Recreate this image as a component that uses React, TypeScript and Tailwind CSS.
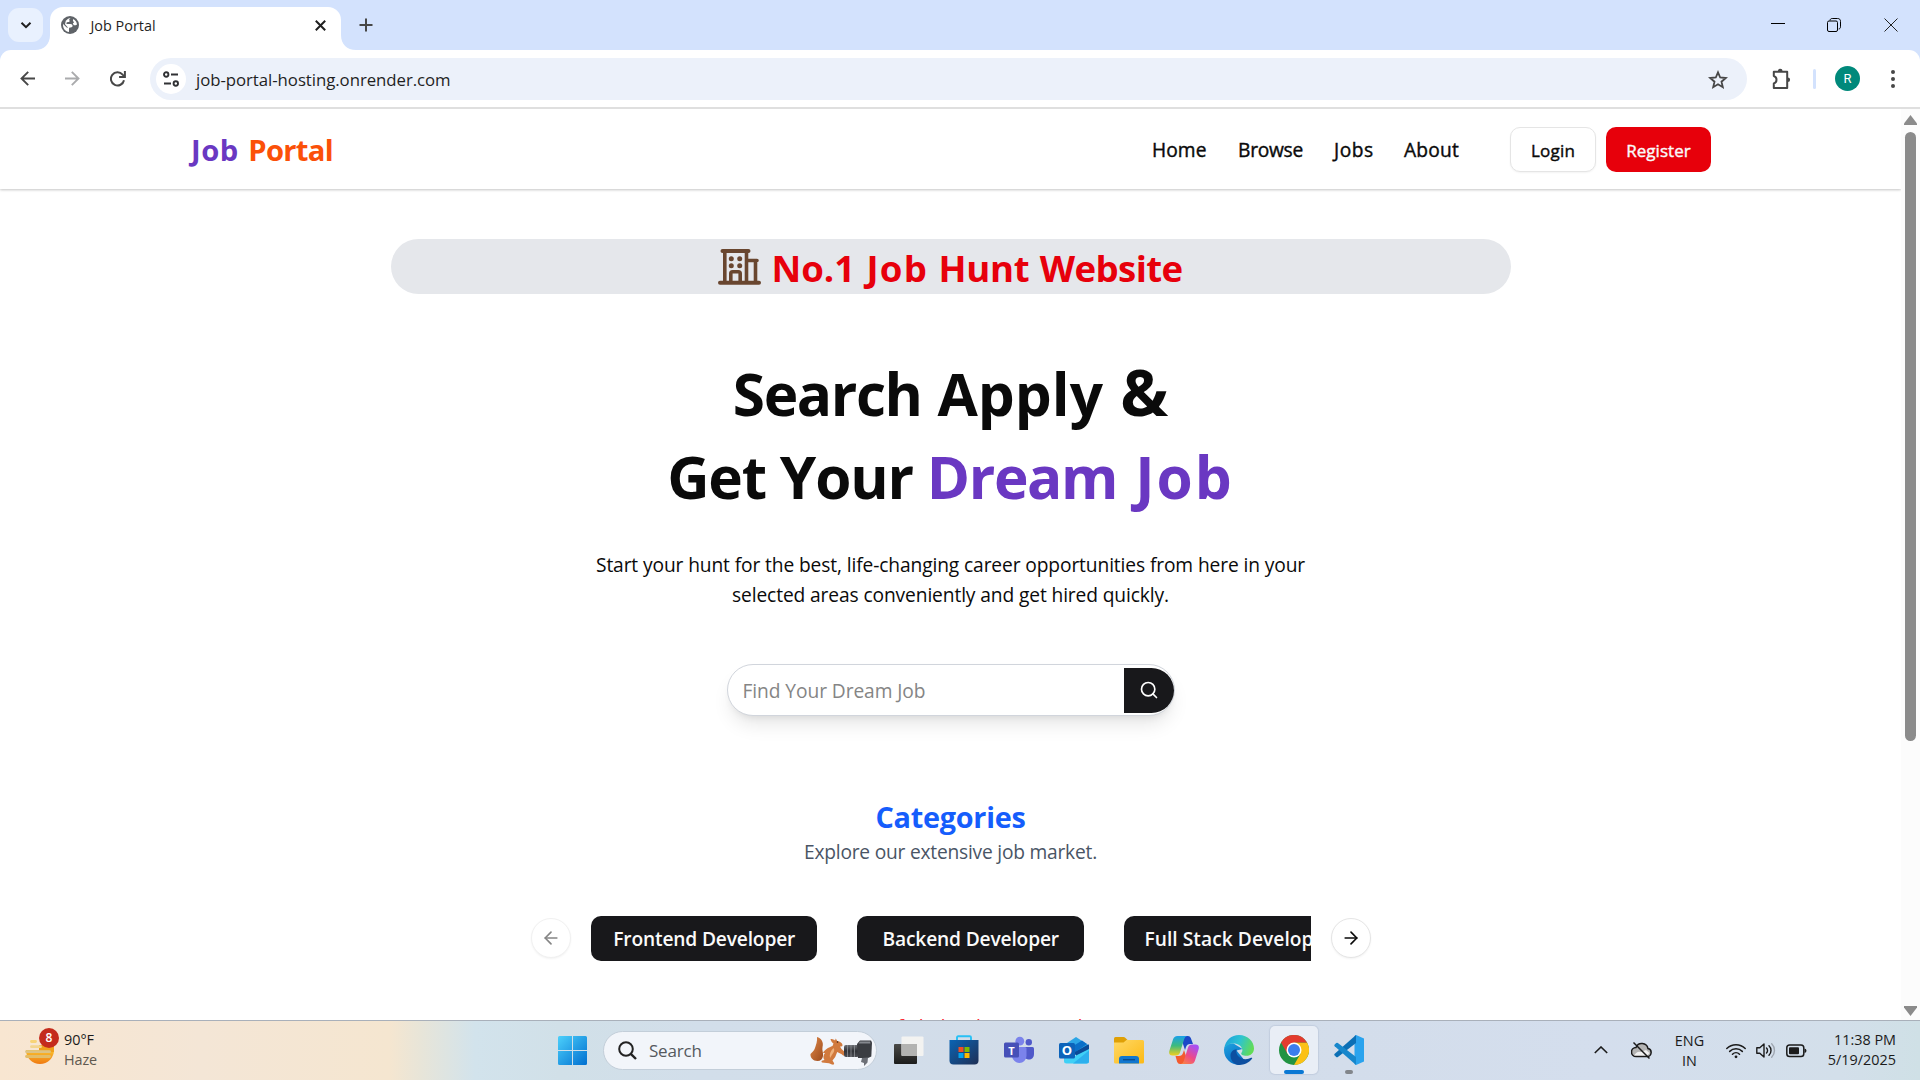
import type { ReactNode } from "react";
import { ArrowLeft, ArrowRight, Search } from "lucide-react";

/* ---------- Browser chrome ---------- */

function GlobeIcon() {
  return (
    <svg className="size-[18px]" viewBox="0 0 18 18">
      <circle cx="9" cy="9" r="9" fill="#5f6368" />
      <path d="M9.800 1.900c-1.500.5-2 1.700-1.300 2.500.4 1-.3 1.600-1.500 1.600-1.300 0-1.900.8-1.400 1.900h3.800c1.400 0 2.200.8 2.200 1.900s-.8 1.600-1.900 1.600H8.600c-.6.500-.6 1.300-.6 2.100v2.400C4.500 15.500 2 12.600 2 9c0-.4 0-.7.1-1l3.300 3.300c.4.400 1 .5 1.500.2L4 8.200l.8-3.400 2-1.800c.9-.6 2-1 3-1.100z" fill="#fff" />
      <path d="M12.200 3c2.100 1.100 3.600 3.100 3.800 5.500l-1.300.8h-1.900l-1-1.900 1.300-1.200-1.200-1.300z" fill="#fff" />
    </svg>
  );
}

function TabStrip() {
  return (
    <div className="flex h-[50px] bg-[#d3e2fd]">
      <div className="mt-2 ml-2 flex h-[34px] w-[35px] items-center justify-center rounded-[11px] bg-[#e9f1fe]">
        <svg className="size-[12px]" viewBox="0 0 12 12" fill="none" stroke="#1f1f1f" strokeWidth="2">
          <path d="M1.500 3.700 6 8.200l4.500-4.500" />
        </svg>
      </div>
      <div className="relative mt-[7px] ml-[7px] flex h-[43px] w-[291px] items-start rounded-t-[13px] bg-white">
        <svg className="absolute bottom-0 -left-[15px] size-[15px]" viewBox="0 0 15 15">
          <path d="M15 0v15H0C9 15 15 9 15 0z" fill="#fff" />
        </svg>
        <svg className="absolute -right-[15px] bottom-0 size-[15px]" viewBox="0 0 15 15">
          <path d="M0 0v15h15C6 15 0 9 0 0z" fill="#fff" />
        </svg>
        <div className="mt-[9px] ml-[11px]">
          <GlobeIcon />
        </div>
        <span className="mt-[8.500px] ml-[11.500px] text-[14.400px] leading-5 text-[#1f1f1f]">Job Portal</span>
        <svg className="mt-[12.500px] mr-[15px] ml-auto size-[11px]" viewBox="0 0 11 11" stroke="#1f1f1f" strokeWidth="2">
          <path d="m.8.800 9.400 9.400M10.200.8.8 10.200" />
        </svg>
      </div>
      <svg className="mt-[18px] ml-[17.500px] size-[14px]" viewBox="0 0 14 14" stroke="#474747" strokeWidth="2">
        <path d="M7 .5v13M.5 7h13" />
      </svg>
      <div className="ml-auto flex h-[50px] items-start">
        <svg className="mt-[17px] mr-[42px] size-[14px]" viewBox="0 0 14 14" stroke="#000" fill="none">
          <path d="M0 6.500h14" />
        </svg>
        <svg className="mt-[18px] mr-[43px] size-[14px]" viewBox="0 0 14 14" stroke="#000" fill="none">
          <rect x=".5" y="3" width="10" height="10.500" rx="1.500" />
          <path d="M3 2.500C3.200 1 4 .5 5.200.5h5.300c2 0 3 1 3 3v5.300c0 1.200-.5 2-1.800 2.200" />
        </svg>
        <svg className="mt-[17.500px] mr-[22px] size-[14px]" viewBox="0 0 14 14" stroke="#222" fill="none">
          <path d="m.5.5 13 13m0-13-13 13" />
        </svg>
      </div>
    </div>
  );
}

function Toolbar() {
  return (
    <div className="bg-[#d3e2fd]">
      <div className="flex h-[57px] items-center rounded-t-[11px] bg-white">
        <svg className="ml-5 size-[15px]" viewBox="0 0 15 15" fill="none" stroke="#474747" strokeWidth="1.900">
          <path d="M15 7.500H1.500M8.200.8 1.500 7.500l6.700 6.700" />
        </svg>
        <svg className="ml-[30px] size-[15px]" viewBox="0 0 15 15" fill="none" stroke="#aaabad" strokeWidth="1.900">
          <path d="M0 7.500h13.500M6.800.8l6.700 6.700-6.700 6.700" />
        </svg>
        <svg className="ml-[30px] size-[16px]" viewBox="0 0 16 16" fill="none" stroke="#474747" strokeWidth="2">
          <path d="M14 9.200A6.600 6.600 0 1 1 12.600 3.600L14.300 5.300" />
          <path d="M14.900 0v6H9.100" />
        </svg>
        <div className="ml-6 flex h-[42px] w-[1597px] items-center rounded-full bg-[#ecf1fa]">
          <div className="ml-[6px] flex size-[30px] items-center justify-center rounded-full bg-white">
            <svg className="size-[16px]" viewBox="0 0 16 16" fill="none" stroke="#303134" strokeWidth="1.900">
              <circle cx="3.200" cy="3.500" r="2.200" />
              <path d="M8 3.500h7M1 12.500h7" />
              <circle cx="12.800" cy="12.500" r="2.200" />
            </svg>
          </div>
          <span className="mt-[2px] ml-[10px] text-[16.800px] leading-6 tracking-[-0.050px] text-[#1f1f1f]">job-portal-hosting.onrender.com</span>
          <svg className="mt-[2px] mr-[19px] ml-auto size-[20px]" viewBox="0 0 20 20" fill="none" stroke="#474747" strokeWidth="1.800">
            <path d="m10 2.300 2.200 5.200 5.600.5-4.300 3.700 1.300 5.500L10 14.300l-4.800 2.900 1.300-5.500L2.200 8l5.600-.5z" />
          </svg>
        </div>
        <svg className="ml-[24px] size-[22px]" viewBox="0 0 22 22" fill="none" stroke="#474747" strokeWidth="2" strokeLinejoin="round">
          <path d="M3.800 3.800h13.400v16.200H3.800v-4.600c3.600-1 3.600-6.400 0-7.400z" transform="translate(-1 0)" />
          <path d="M6.800 3.200a2.400 2.400 0 0 1 4.800 0zM16.800 9.400a2.300 2.300 0 0 1 0 4.600z" fill="#474747" stroke="none" />
        </svg>
        <div className="ml-[20px] h-5 w-[2.500px] rounded-full bg-[#d3e2fd]" />
        <div className="ml-[19.500px] flex size-[25px] items-center justify-center rounded-full bg-[#00897b] font-[Roboto] text-[13px] text-white">R</div>
        <div className="ml-[30.500px] flex flex-col gap-[3px]">
          <div className="size-1 rounded-full bg-[#474747]" />
          <div className="size-1 rounded-full bg-[#474747]" />
          <div className="size-1 rounded-full bg-[#474747]" />
        </div>
      </div>
    </div>
  );
}

/* ---------- Page ---------- */

function SiteHeader() {
  return (
    <header className="flex h-20 shrink-0 items-center bg-white pl-[191px] shadow-[0_1px_3px_rgba(0,0,0,0.14),0_1px_2px_rgba(0,0,0,0.1)]">
      <h1 className="mt-[2px] text-[29.200px] leading-10 font-bold tracking-[0.500px] text-[#6a38c2]">
        Job <span className="ml-[1.500px] tracking-[-0.700px] text-[#fb5008]">Portal</span>
      </h1>
      <nav className="mt-[2px] ml-auto flex gap-[30px] text-[19.200px] leading-[30px] font-medium whitespace-nowrap text-[#0a0a0a] [-webkit-text-stroke:0.400px_#0a0a0a]">
        <a className="w-[56px] tracking-[0.060px]">Home</a>
        <a className="w-[66px] tracking-[-0.260px]">Browse</a>
        <a className="w-[40px] tracking-[0.500px]">Jobs</a>
        <a className="w-[56px] tracking-[0.200px]">About</a>
      </nav>
      <div className="mr-[190px] ml-[50px] flex gap-[10px] text-[17px] font-medium">
        <button className="h-[45px] w-[86px] rounded-[10px] border border-[#e5e5e5] bg-white pt-[3px] tracking-[0.200px] text-[#0a0a0a] shadow-xs [-webkit-text-stroke:0.400px_#0a0a0a]">Login</button>
        <button className="h-[45px] w-[105px] rounded-[10px] bg-[#e7000b] pt-[3px] tracking-[0.060px] text-[#fafafa] [-webkit-text-stroke:0.400px_#fafafa]">Register</button>
      </div>
    </header>
  );
}

function BuildingIcon() {
  return (
    <svg className="h-[36px] w-[43px]" viewBox="0 0 43 36" fill="none" stroke="#69462f">
      <path d="M2 33.700h39M4.500 2h26" strokeWidth="4" strokeLinecap="round" />
      <path d="M6.800 3v30M28.500 3v30M29 11.500h10M37.500 12v21" strokeWidth="3.600" strokeLinecap="round" />
      <path d="M12.800 33v-8.500q0-1.800 1.800-1.800h5.800q1.800 0 1.800 1.800V33" strokeWidth="3.600" />
      <g fill="#69462f" stroke="none">
        <circle cx="13.300" cy="9.800" r="2.500" />
        <circle cx="21.700" cy="9.800" r="2.500" />
        <circle cx="13.300" cy="16.800" r="2.500" />
        <circle cx="21.700" cy="16.800" r="2.500" />
      </g>
    </svg>
  );
}

function Hero() {
  return (
    <section className="flex flex-col items-center">
      <div className="mt-[50px] flex h-[55px] w-[1120px] items-start justify-center rounded-full bg-[#e5e7eb]">
        <div className="mt-[10px]">
          <BuildingIcon />
        </div>
        <span className="mt-[3.500px] ml-[10px] text-[36.600px] leading-[50px] font-bold tracking-[-0.020px] text-[#e7000b]">
          No.1 <span className="ml-[2px] tracking-[1.200px]">Job</span> <span className="ml-px tracking-[-0.300px]">Hunt</span>{" "}
          <span className="ml-[1px] tracking-[-0.600px]">Website</span>
        </span>
      </div>
      <h2 className="mt-[58px] text-center text-[58.500px] leading-[82.500px] font-bold text-[#0a0a0a]">
        <span className="tracking-[-1.400px]">Search </span>
        <span className="ml-[2px]">Apply</span> <span className="ml-[2px] text-[64px] leading-none">&amp;</span>
        <br />
        <span className="tracking-[-1.200px]">Get Your </span>
        <span className="text-[#6a38c2]">
          <span className="tracking-[-1.400px]">Dream</span> <span className="ml-[3px] tracking-[2px]">Job</span>
        </span>
      </h2>
      <p className="mt-[32.500px] text-center text-[19.200px] leading-[30px] tracking-[-0.115px] text-[#0a0a0a]">
        Start your hunt for the best, life-changing career opportunities from here in your
        <br />
        selected areas conveniently and get hired quickly.
      </p>
      <div className="mt-[54px] flex h-[52px] w-[448px] items-center rounded-full border border-[#d1d5dc] bg-white pl-[15px] shadow-[0_12px_19px_-4px_rgba(0,0,0,0.1),0_5px_8px_-5px_rgba(0,0,0,0.1)]">
        <span className="mt-[2px] text-[19.200px] leading-[30px] tracking-[-0.080px] text-[#858585]">Find Your Dream Job</span>
        <button className="mt-px ml-auto flex h-[45px] w-[50px] items-center justify-center rounded-r-full bg-[#18181b]">
          <Search className="size-5 text-white" strokeWidth={2} />
        </button>
      </div>
    </section>
  );
}

function CategoryButton({ children }: { children: ReactNode }) {
  return (
    <button className="h-[45px] w-[226.500px] shrink-0 rounded-[10px] bg-[#18181b] pt-[2px] pl-px text-[19.200px] font-semibold tracking-[-0.170px] whitespace-nowrap text-[#fafafa]">
      {children}
    </button>
  );
}

function Categories() {
  return (
    <section className="flex flex-col items-center">
      <h2 className="mt-[83px] text-[28.800px] leading-9 font-bold tracking-[-0.250px] text-[#155dfc]">Categories</h2>
      <p className="mt-[2px] text-[19.200px] leading-[30px] tracking-[-0.220px] text-[#4a5565]">Explore our extensive job market.</p>
      <div className="mt-[49px] flex items-start">
        <button className="mt-[2px] flex size-10 items-center justify-center rounded-full border border-[#f1f1f1] bg-white text-[#858585] shadow-xs">
          <ArrowLeft className="size-5" />
        </button>
        <div className="mx-5 flex w-[720px] gap-[40px] overflow-hidden">
          <CategoryButton>Frontend Developer</CategoryButton>
          <CategoryButton>Backend Developer</CategoryButton>
          <CategoryButton>
            <span className="ml-[3px] tracking-[0.050px]">Full Stack Developer</span>
          </CategoryButton>
        </div>
        <button className="mt-[2px] flex size-10 items-center justify-center rounded-full border border-[#e5e5e5] bg-white text-[#0a0a0a] shadow-xs">
          <ArrowRight className="size-5" />
        </button>
      </div>
      <p className="mt-[51px] ml-[821px] self-start text-[19.200px] leading-[30px] tracking-[-0.200px] text-[#fb2c36]">Request failed with status code 404</p>
    </section>
  );
}

function Scrollbar() {
  return (
    <div className="flex w-[19px] shrink-0 flex-col items-center bg-[#fcfcfc]">
      <svg className="mt-[6px] h-[10px] w-[13px]" viewBox="0 0 13 10" fill="#8b8b8b">
        <path d="M6.500 0 13 8.500V10H0V8.500z" />
      </svg>
      <div className="mt-[7px] h-[609px] w-[11px] rounded-full bg-[#8b8b8b]" />
      <svg className="mt-auto mb-[4px] h-[10px] w-[13px]" viewBox="0 0 13 10" fill="#8b8b8b">
        <path d="M6.500 10 13 1.500V0H0v1.500z" />
      </svg>
    </div>
  );
}

/* ---------- Taskbar ---------- */

function WeatherIcon() {
  return (
    <svg className="h-[30px] w-[34px]" viewBox="0 0 34 30">
      <defs>
        <linearGradient id="sun" x1="0" y1="0" x2="0" y2="1">
          <stop offset="0" stopColor="#f9c22e" />
          <stop offset="1" stopColor="#f07a12" />
        </linearGradient>
      </defs>
      <path d="M1 18h28a14 14 0 0 1-28 0z" fill="url(#sun)" transform="translate(0 -3)" />
      <path d="M14 10h15v7H14z" fill="#f0a01c" />
      <g strokeLinecap="round" strokeWidth="2.800">
        <path d="M6.500 6.500h4" stroke="#f8d477" />
        <path d="M6.500 11.700h9" stroke="#f3d58e" />
        <path d="M1.500 16.700h23" stroke="#dcc386" />
        <path d="M1.500 21.500h23" stroke="#e3bd68" />
      </g>
    </svg>
  );
}

function SquirrelIcon() {
  return (
    <svg className="h-[30px] w-[62px]" viewBox="0 0 62 30">
      <defs>
        <linearGradient id="fur" x1="0" y1="0" x2="1" y2="1">
          <stop offset="0" stopColor="#e08a4a" />
          <stop offset="1" stopColor="#9c4a1c" />
        </linearGradient>
        <linearGradient id="lens" x1="0" y1="0" x2="0" y2="1">
          <stop offset="0" stopColor="#6c6e74" />
          <stop offset=".5" stopColor="#2f3136" />
          <stop offset="1" stopColor="#4c4e54" />
        </linearGradient>
      </defs>
      <path d="M7 1c4 1 7 5 5.500 10-.7 3 1 6 .5 9-.4 3-2.500 5-5.500 5C3 25 0 21.500.5 18c1.500-2 3.500-3 4.500-6S7.500 5 7 1z" fill="url(#fur)" />
      <path d="M13 17c2-4 6-5.500 9.500-7l1-2.500c-1.500-1-2.500-2.500-3-4.500 2 0 3.500.5 4.500 1.500l.8-2 1.400 2.500c3 .5 5 2 5.300 4 .2 1-.8 1.500-2.500 1.500l1.500 2.500 2.700 2.500c1 1.500 1.300 3.500.5 4-1.200.5-2-.3-3-1.300l-4.500-2.200-2 5-2.700 3.500 1.500 2.500c.5 1.200-.5 2-2 1.500l-3-1.200-7-.8c-1-.8-.5-2 .5-2l2-.5c-1.500-2-1.500-4.500.500-7z" fill="#d17a3e" />
      <path d="M23.500 12c1.500 2 .5 4-1 6l-2.500 4c-.8-3.500.5-7.500 3.500-10z" fill="#efb27c" />
      <circle cx="27.500" cy="6" r=".8" fill="#3a1c0c" />
      <rect x="34" y="9" width="15" height="12" rx="2" fill="url(#lens)" />
      <path d="M37.500 9v12M41 9v12M44.500 9v12" stroke="#8d9096" strokeWidth=".8" />
      <path d="M47 8 50 4.500h11l1 2-.7 14L58 22H48z" fill="#3b3d42" />
      <path d="M50 5.500h10l.5 2H48.500z" fill="#85888e" />
      <path d="m52 22 6-.5-.5 5-3.500 3.500V27l-3-1z" fill="#6c6f76" />
    </svg>
  );
}

function StartIcon() {
  return (
    <svg className="size-[29px]" viewBox="0 0 29 29">
      <defs>
        <linearGradient id="win" x1="0" y1="0" x2="1" y2="1">
          <stop offset="0" stopColor="#4cd0fb" />
          <stop offset="1" stopColor="#006fd0" />
        </linearGradient>
      </defs>
      <path d="M1.500 0H14v14H0V1.500Q0 0 1.500 0zM15 0h12.500Q29 0 29 1.500V14H15zM0 15h14v14H1.500Q0 29 0 27.500zM15 15h14v12.500q0 1.500-1.500 1.500H15z" fill="url(#win)" />
    </svg>
  );
}

function TaskViewIcon() {
  return (
    <svg className="size-[30px]" viewBox="0 0 30 30">
      <defs>
        <linearGradient id="tvd" x1="0" y1="0" x2="0" y2="1">
          <stop offset="0" stopColor="#4a4a48" />
          <stop offset="1" stopColor="#1c1c1b" />
        </linearGradient>
      </defs>
      <rect x="0" y="9" width="23" height="20" rx="1" fill="url(#tvd)" />
      <rect x="7.500" y="1.500" width="22" height="19.500" rx="1" fill="#f3f3f1" />
      <path d="M7.500 9H23v12H8.500q-1 0-1-1z" fill="#b3b3b1" />
    </svg>
  );
}

function StoreIcon() {
  return (
    <svg className="size-[30px]" viewBox="0 0 30 30">
      <defs>
        <linearGradient id="bag" x1="0" y1="0" x2="1" y2="1">
          <stop offset="0" stopColor="#0a64b4" />
          <stop offset="1" stopColor="#1f2f55" />
        </linearGradient>
      </defs>
      <path d="M8 6.500V2.500Q8 1.300 9.200 1.300h11.600Q22 1.300 22 2.500v4" fill="none" stroke="#28c0f5" strokeWidth="1.900" />
      <path d="M.5 5h29v20.500q0 4-4 4h-21q-4 0-4-4z" fill="url(#bag)" />
      <path d="M9.500 12h5v5h-5z" fill="#f25022" />
      <path d="M15.500 12h5v5h-5z" fill="#7fba00" />
      <path d="M9.500 18h5v5h-5z" fill="#00a4ef" />
      <path d="M15.500 18h5v5h-5z" fill="#ffb900" />
    </svg>
  );
}

function TeamsIcon() {
  return (
    <div className="relative size-[30px]">
      <svg className="size-[30px]" viewBox="0 0 30 30">
        <circle cx="24.800" cy="7.300" r="3.200" fill="#5059c9" />
        <path d="M20 12h8.500q1.500 0 1.500 1.500V19c0 4-3 6-6 5.500l-5-2z" fill="#5059c9" />
        <circle cx="15.800" cy="6.200" r="4.400" fill="#7b83eb" />
        <path d="M8 12h13q1.500 0 1.500 1.500v7C22.500 25 19 28 15.500 28S8.500 25 8 21z" fill="#7b83eb" />
        <rect x="0" y="7.500" width="15" height="15" rx="1.500" fill="#4650b8" />
      </svg>
      <span className="absolute top-[7.500px] left-0 w-[15px] text-center text-[11px] leading-[15px] font-bold text-white">T</span>
    </div>
  );
}

function OutlookIcon() {
  return (
    <div className="relative size-[30px]">
      <svg className="size-[30px]" viewBox="0 0 30 30">
        <path d="M5 10 17 2l13 8.500v5L18 20 5 16z" fill="#2ba5e6" />
        <path d="m11 13 12-7.500 5 3.500-13 9z" fill="#0a6fc8" />
        <path d="m15 17.500 14.500-8.300.5 1v6L18 22z" fill="#0b4a97" />
        <path d="M5 15.500 16 21l14-7v12q0 2.500-2.500 2.500h-20Q5 28.500 5 26z" fill="#3fd0f6" />
        <path d="m14 28.500 16-13V26q0 2.500-2.500 2.500z" fill="#2db0ee" />
        <rect x="0" y="8" width="16" height="15.500" rx="1.500" fill="#0c63ba" />
      </svg>
      <span className="absolute top-[8px] left-0 w-[16px] text-center text-[13px] leading-[15px] font-bold text-white">O</span>
    </div>
  );
}

function FolderIcon() {
  return (
    <svg className="size-[30px]" viewBox="0 0 30 30">
      <defs>
        <linearGradient id="fold" x1="0" y1="0" x2="1" y2="1">
          <stop offset="0" stopColor="#ffd865" />
          <stop offset="1" stopColor="#fcb914" />
        </linearGradient>
      </defs>
      <path d="M0 3.500Q0 2 1.500 2h8q1 0 2 1l2 2-3 4H0z" fill="#dfa006" />
      <path d="M0 7.500h9.500L12.500 5h16q1.500 0 1.500 1.500V27q0 1.500-1.500 1.500h-27Q0 28.500 0 27z" fill="url(#fold)" />
      <path d="M5 28.500V24q0-3 3-3h14q3 0 3 3v4.500z" fill="#1177cf" />
      <path d="M9 24.700h12" stroke="#0a4b8f" strokeWidth="1.400" />
    </svg>
  );
}

function CopilotIcon() {
  return (
    <svg className="size-[30px]" viewBox="0 0 30 30">
      <defs>
        <linearGradient id="cpa" x1="0" y1="0" x2="0" y2="1">
          <stop offset="0" stopColor="#1aa0ea" />
          <stop offset=".5" stopColor="#3dbb7d" />
          <stop offset="1" stopColor="#f2cf1d" />
        </linearGradient>
        <linearGradient id="cpb" x1="0" y1="1" x2=".6" y2="0">
          <stop offset="0" stopColor="#fb8a3c" />
          <stop offset=".5" stopColor="#ee4a87" />
          <stop offset="1" stopColor="#a94ff0" />
        </linearGradient>
      </defs>
      <path d="M13 1h6q2 0 2.800 2L24 9h-3q-3 0-4 3l-1 3-3-9z" fill="#1b49c8" />
      <path d="M17 29h-6q-2 0-2.800-2L6.500 21H10q3 0 4-3l1-3 3 9z" fill="#f45a2e" />
      <path d="M8.500 1H18q-2 .5-2.800 3L11 17.500Q10 20.500 7 20.500H3.500Q-.6 20.500.3 16L4 4.500Q5 1 8.500 1z" fill="url(#cpa)" />
      <path d="M21.500 29H12q2-.5 2.800-3L19 12.500q1-3 4-3h3.500q4.100 0 3.200 4.500L26 25.500q-1 3.500-4.500 3.500z" fill="url(#cpb)" />
    </svg>
  );
}

function EdgeIcon() {
  return (
    <svg className="size-[30px]" viewBox="0 0 30 30">
      <defs>
        <linearGradient id="ega" x1="0" y1=".2" x2="1" y2=".5">
          <stop offset="0" stopColor="#1ba0dc" />
          <stop offset=".5" stopColor="#2dc3d2" />
          <stop offset="1" stopColor="#62dc55" />
        </linearGradient>
        <linearGradient id="egb" x1="0" y1="0" x2=".6" y2="1">
          <stop offset="0" stopColor="#1fa3df" />
          <stop offset="1" stopColor="#0669c4" />
        </linearGradient>
      </defs>
      <path d="M0 15C0 11 4 8 9.500 8.500l9 5.500-6 1.500 9 11A15 15 0 0 1 15 30 15 15 0 0 1 0 15z" fill="url(#egb)" />
      <path d="M.2 13.500C1.500 5 7.500 0 15 0c9 0 15 6.500 15 13.500 0 4.500-3.300 7.300-7.500 7.300-4 0-5.800-1.300-5.200-2.800.9-1.200 1.200-2 1-3.300C17.800 11 14 8.500 9.500 8.500 5.500 8.500 2 10.500.2 13.500z" fill="url(#ega)" />
      <path d="M12.700 14.200c-1.700 4.800 2.500 10 8.800 10 2.300 0 4-.6 5.500-1.400 1-.5 1.500.2 1 1C25.500 27.500 20.500 30 15 30 10 29.500 6.500 25.500 6.500 20.500c0-3.500 3-6.300 6.200-6.300z" fill="#0d4fa0" />
    </svg>
  );
}

function ChromeIcon() {
  return (
    <svg className="size-[30px]" viewBox="0 0 48 48">
      <circle cx="24" cy="24" r="24" fill="#229342" />
      <path d="M24 12h20.800A24 24 0 0 1 24 48l10.400-18z" fill="#fbc116" />
      <path d="M3.200 12A24 24 0 0 1 44.800 12H24L13.600 30z" fill="#e33b2e" />
      <circle cx="24" cy="24" r="12" fill="#fff" />
      <circle cx="24" cy="24" r="9.600" fill="#3b7ded" />
    </svg>
  );
}

function VsCodeIcon() {
  return (
    <svg className="size-[30px]" viewBox="0 0 30 30">
      <path d="M22 0 30 3.500v23L22 30l-1.500-1V1z" fill="#2aa3ee" />
      <path d="M22 0 .7 18.800q-.9.900 0 1.800l1.500 1.300q.9.600 1.700 0L22 8z" fill="#0b6fb5" />
      <path d="M22 30 .7 11.200q-.9-.9 0-1.800l1.500-1.300q.9-.6 1.700 0L22 22z" fill="#1787cc" />
    </svg>
  );
}

function TaskButton({ children, active, marker }: { children: ReactNode; active?: boolean; marker?: string }) {
  return (
    <div className={`relative mr-[7px] flex size-12 items-center justify-center rounded-[5px] ${active ? "bg-[#e9eef6] shadow-[0_0_1px_1px_rgba(120,140,170,0.18)]" : ""}`}>
      {children}
      {marker && <div className={`absolute bottom-0 h-[4px] rounded-full ${marker}`} />}
    </div>
  );
}

function Tray() {
  return (
    <div className="ml-auto flex items-start pr-6 text-[14.400px] leading-5 text-[#1b1b1b]">
      <svg className="mt-[25px] h-[8px] w-[14px]" viewBox="0 0 14 8" fill="none" stroke="#1b1b1b" strokeWidth="1.600">
        <path d="m.8 7 6.200-6 6.200 6" />
      </svg>
      <svg className="mt-[20px] ml-[23px] h-[18px] w-[21px]" viewBox="0 0 21 18">
        <path d="M5 15.500h11a4 4 0 0 0 1-7.900 6.300 6.300 0 0 0-12-1.100 4.500 4.500 0 0 0 0 9z" fill="#b4b4b4" stroke="#1b1b1b" strokeWidth="1.500" />
        <path d="M3 14.500q3-5 7-3.500l5-2 3.500 3-2 2.500z" fill="#f1f1f1" />
        <path d="m2.500 1.500 16 16" stroke="#1b1b1b" strokeWidth="1.500" />
      </svg>
      <div className="mt-[10px] ml-[22px] w-[31px] text-center">
        ENG
        <br />
        IN
      </div>
      <svg className="mt-[20.500px] ml-[21px] h-[17px] w-[20px]" viewBox="0 0 20 17" fill="none" stroke="#1b1b1b" strokeWidth="1.500" strokeLinecap="round">
        <path d="M.8 6.500a13 13 0 0 1 18.400 0M3.700 9.400a9 9 0 0 1 12.600 0M6.500 12.200a5 5 0 0 1 7 0" />
        <circle cx="10" cy="14.800" r="1.400" fill="#1b1b1b" stroke="none" />
      </svg>
      <svg className="mt-[21px] ml-[10px] h-[17px] w-[20px]" viewBox="0 0 20 17" fill="none" stroke="#1b1b1b" strokeWidth="1.400" strokeLinecap="round" strokeLinejoin="round">
        <path d="M.8 5.800h3L8 2v13l-4.200-3.800h-3z" />
        <path d="M10.500 6a3.500 3.500 0 0 1 0 5M13 3.800a6.500 6.500 0 0 1 0 9.400" />
        <path d="M15.700 1.800a9.500 9.500 0 0 1 0 13.400" stroke="#9fa6b0" />
      </svg>
      <svg className="mt-[22.500px] ml-[10px] h-[14px] w-[21px]" viewBox="0 0 21 14">
        <rect x=".8" y="1" width="17" height="11.500" rx="2.800" fill="none" stroke="#1b1b1b" strokeWidth="1.500" />
        <rect x="3" y="3.200" width="10" height="7" rx="1" fill="#1b1b1b" />
        <path d="M18.500 4.500q2 .5 2 2.200t-2 2.300z" fill="#1b1b1b" />
      </svg>
      <div className="mt-[9px] ml-[20px] w-[69px] text-right">
        11:38 PM
        <br />
        5/19/2025
      </div>
    </div>
  );
}

function Taskbar() {
  return (
    <div className="flex h-[60px] shrink-0 border-t border-[#a9b0ba] bg-[linear-gradient(90deg,#f8e6d1_0px,#f4e6d6_200px,#f5e6d0_390px,#e8e5d8_420px,#d2e3ec_475px,#d1e0e8_560px,#d2deea_700px,#d2dce9_1100px,#d4deed_1600px,#d3dfea_1840px,#cfe0e6_1920px)]">
      <div className="relative mt-[14px] ml-[25px]">
        <WeatherIcon />
        <div className="absolute -top-[7px] left-[14px] flex size-5 items-center justify-center rounded-full bg-[#c42b1c] text-[12px] font-semibold text-white">8</div>
      </div>
      <div className="mt-[9px] ml-[5px] w-[494px] text-[14.400px] leading-5 text-[#1b1b1b]">
        90°F
        <br />
        <span className="tracking-[-0.100px] text-[#60594f]">Haze</span>
      </div>
      <div className="mt-[15px]">
        <StartIcon />
      </div>
      <div className="mt-[10px] ml-[16px] flex h-[39px] w-[274px] items-center rounded-full border border-[#c3ced9] bg-[#f2f5fa]">
        <svg className="ml-[14px] size-[19px]" viewBox="0 0 19 19" fill="none" stroke="#222" strokeWidth="2">
          <circle cx="8" cy="8" r="6.800" />
          <path d="m12.800 12.800 5.200 5.200" strokeWidth="2.400" />
        </svg>
        <span className="mt-px ml-[12px] text-[17px] leading-6 tracking-[-0.200px] text-[#55595e]">Search</span>
        <div className="mr-[4px] ml-auto">
          <SquirrelIcon />
        </div>
      </div>
      <div className="mt-[5px] ml-[8px] flex">
        <TaskButton><TaskViewIcon /></TaskButton>
        <TaskButton><StoreIcon /></TaskButton>
        <TaskButton><TeamsIcon /></TaskButton>
        <TaskButton><OutlookIcon /></TaskButton>
        <TaskButton><FolderIcon /></TaskButton>
        <TaskButton><CopilotIcon /></TaskButton>
        <TaskButton><EdgeIcon /></TaskButton>
        <TaskButton active marker="w-5 bg-[#0a78d4]"><ChromeIcon /></TaskButton>
        <TaskButton marker="w-2 bg-[#82868b]"><VsCodeIcon /></TaskButton>
      </div>
      <Tray />
    </div>
  );
}

export default function App() {
  return (
    <div className="flex h-[1080px] w-[1920px] flex-col overflow-hidden bg-white font-['Open_Sans','Noto_Sans',sans-serif]">
      <TabStrip />
      <Toolbar />
      <div className="h-[2px] shrink-0 bg-[#dfdfdf]" />
      <div className="flex min-h-0 flex-1">
        <main className="flex flex-1 flex-col overflow-hidden bg-white">
          <SiteHeader />
          <Hero />
          <Categories />
        </main>
        <Scrollbar />
      </div>
      <Taskbar />
    </div>
  );
}
